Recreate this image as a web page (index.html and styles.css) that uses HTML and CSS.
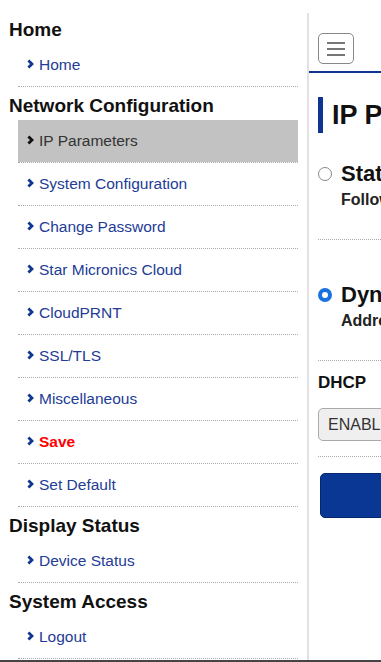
FILE: index.html
```html
<!DOCTYPE html>
<html lang="en">
<head>
	<title>IP Parameters</title>
	<meta charset="utf-8">
	<meta name="viewport" content="width=device-width, initial-scale=1">

	<link rel="stylesheet" href="styles.css">
</head>

<body>
	<div class="page">
		<nav class="sidebar">
			<h2>Home</h2>
			<ul>
				<li><a href="#"><svg class="chev" viewBox="0 0 7 10"><path d="M1.4 1.4l3.6 3.6-3.6 3.6"/></svg>Home</a></li>
			</ul>

			<h2>Network Configuration</h2>
			<ul>
				<li class="current"><a href="#"><svg class="chev" viewBox="0 0 7 10"><path d="M1.4 1.4l3.6 3.6-3.6 3.6"/></svg>IP Parameters</a></li>
				<li><a href="#"><svg class="chev" viewBox="0 0 7 10"><path d="M1.4 1.4l3.6 3.6-3.6 3.6"/></svg>System Configuration</a></li>
				<li><a href="#"><svg class="chev" viewBox="0 0 7 10"><path d="M1.4 1.4l3.6 3.6-3.6 3.6"/></svg>Change Password</a></li>
				<li><a href="#"><svg class="chev" viewBox="0 0 7 10"><path d="M1.4 1.4l3.6 3.6-3.6 3.6"/></svg>Star Micronics Cloud</a></li>
				<li><a href="#"><svg class="chev" viewBox="0 0 7 10"><path d="M1.4 1.4l3.6 3.6-3.6 3.6"/></svg>CloudPRNT</a></li>
				<li><a href="#"><svg class="chev" viewBox="0 0 7 10"><path d="M1.4 1.4l3.6 3.6-3.6 3.6"/></svg>SSL/TLS</a></li>
				<li><a href="#"><svg class="chev" viewBox="0 0 7 10"><path d="M1.4 1.4l3.6 3.6-3.6 3.6"/></svg>Miscellaneous</a></li>
				<li class="save"><a href="#"><svg class="chev" viewBox="0 0 7 10"><path d="M1.4 1.4l3.6 3.6-3.6 3.6"/></svg>Save</a></li>
				<li><a href="#"><svg class="chev" viewBox="0 0 7 10"><path d="M1.4 1.4l3.6 3.6-3.6 3.6"/></svg>Set Default</a></li>
			</ul>

			<h2>Display Status</h2>
			<ul>
				<li><a href="#"><svg class="chev" viewBox="0 0 7 10"><path d="M1.4 1.4l3.6 3.6-3.6 3.6"/></svg>Device Status</a></li>
			</ul>

			<h2>System Access</h2>
			<ul>
				<li><a href="#"><svg class="chev" viewBox="0 0 7 10"><path d="M1.4 1.4l3.6 3.6-3.6 3.6"/></svg>Logout</a></li>
			</ul>
		</nav>

		<main class="content">
			<header class="topbar">
				<button class="menu-btn" aria-label="Menu"><span></span><span></span><span></span></button>
			</header>

			<h1>IP Parameters</h1>

			<div class="option">
				<span class="radio"></span>
				<div>
					<div class="option-title">Static IP Address</div>
					<div class="option-desc">Follow the settings below</div>
				</div>
			</div>

			<div class="option selected">
				<span class="radio"></span>
				<div>
					<div class="option-title">Dynamic IP Address</div>
					<div class="option-desc">Address is obtained automatically</div>
				</div>
			</div>

			<div class="field">
				<div class="field-label">DHCP</div>
				<div class="select">ENABLE</div>
			</div>

			<button class="submit">Submit</button>
		</main>
	</div>
	<div class="bottom-bar"></div>
</body>

</html>
```

FILE: styles.css
```css
body {
	margin: 0;
	padding: 0;
	font-family: "Liberation Sans", Arial, sans-serif;
	background: #fff;
	overflow: hidden;
}
.page {
	display: flex;
	width: 381px;
	height: 660px;
	overflow: hidden;
}
.sidebar {
	flex: 0 0 307px;
	padding-top: 11px;
}
.sidebar h2 {
	margin: 7px 0 2px 9px;
	font-size: 19px;
	line-height: 24px;
	font-weight: bold;
	color: #111;
	white-space: nowrap;
}
.sidebar ul {
	list-style: none;
	margin: 0 9px 0 18px;
	padding: 0;
}
.sidebar li {
	border-bottom: 1px dotted #aaa;
}
.sidebar li a {
	display: flex;
	align-items: center;
	height: 42px;
	padding-left: 9px;
	font-size: 15.5px;
	color: #233c96;
	text-decoration: none;
	white-space: nowrap;
}
.chev {
	width: 7px;
	height: 10px;
	margin: -2px 5px 0 0;
	fill: none;
	stroke: #0f3690;
	stroke-width: 2.8;
}
.sidebar li.current a {
	background: #c2c2c2;
	color: #333;
}
.sidebar li.current .chev {
	stroke: #111;
}
.sidebar li.save a {
	color: #f00;
	font-weight: bold;
}
.content {
	flex: 0 0 360px;
	margin-top: 13px;
	border-left: 2px solid #e2e2e2;
	white-space: nowrap;
}
.topbar {
	padding: 20px 0 7px 9px;
	border-bottom: 2px solid #0d3591;
}
.menu-btn {
	display: flex;
	flex-direction: column;
	justify-content: center;
	gap: 4px;
	width: 36px;
	height: 31px;
	padding: 0 8px;
	background: #fff;
	border: 1px solid #888;
	border-radius: 5px;
}
.menu-btn span {
	display: block;
	height: 2px;
	background: #777;
}
.content h1 {
	margin: 24px 0 0 9px;
	padding-left: 9px;
	border-left: 5px solid #0d3591;
	font-size: 27px;
	line-height: 36px;
	color: #111;
}
.option {
	display: flex;
	gap: 9px;
	margin-left: 9px;
	padding: 27px 0;
	border-bottom: 1px dotted #aaa;
}
.option + .option {
	padding-top: 41px;
}
.radio {
	flex: 0 0 auto;
	box-sizing: border-box;
	width: 14px;
	height: 14px;
	margin-top: 7px;
	border: 1px solid #888;
	border-radius: 50%;
}
.option.selected .radio {
	border: 4px solid #1a72e0;
}
.option-title {
	font-size: 22px;
	line-height: 28px;
	font-weight: bold;
	color: #111;
}
.option-desc {
	font-size: 16px;
	line-height: 24px;
	font-weight: bold;
	color: #222;
}
.field {
	margin-left: 9px;
	padding: 12px 0 15px;
	border-bottom: 1px dotted #aaa;
}
.field-label {
	font-size: 17px;
	line-height: 20px;
	font-weight: bold;
	color: #111;
}
.select {
	box-sizing: border-box;
	width: 140px;
	height: 33px;
	margin-top: 15px;
	padding: 0 9px;
	line-height: 31px;
	font-size: 16px;
	color: #333;
	background: #efefef;
	border: 1px solid #aaa;
	border-radius: 5px;
}
.submit {
	display: block;
	width: 200px;
	height: 45px;
	margin: 16px 0 0 11px;
	background: #0b3794;
	border: 1px solid #06266e;
	border-radius: 5px;
	color: #fff;
	font-size: 16px;
}
.bottom-bar {
	height: 2px;
	background: #444;
}
```
